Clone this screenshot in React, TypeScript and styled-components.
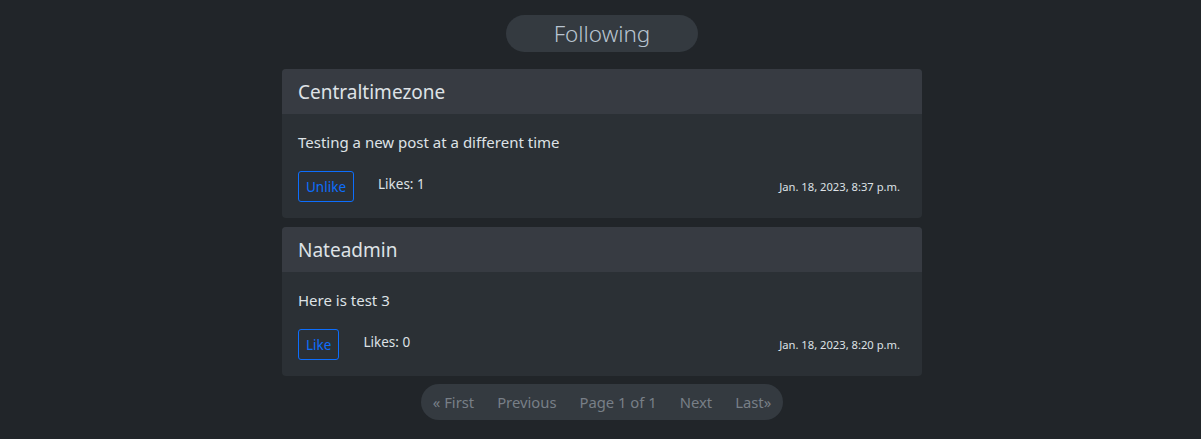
import React from 'react';
import styled, {createGlobalStyle} from 'styled-components';

const GlobalStyle = createGlobalStyle`
  html, body {
    margin: 0;
    padding: 0;
    background: #212529;
  }
  body {
    font-family: "Noto Sans", "Open Sans", sans-serif;
    color: #dee2e6;
  }
`;

type Post = {
  author: string;
  body: string;
  liked: boolean;
  likes: number;
  date: string;
};

const posts: Post[] = [
  {
    author: 'Centraltimezone',
    body: 'Testing a new post at a different time',
    liked: true,
    likes: 1,
    date: 'Jan. 18, 2023, 8:37 p.m.',
  },
  {
    author: 'Nateadmin',
    body: 'Here is test 3',
    liked: false,
    likes: 0,
    date: 'Jan. 18, 2023, 8:20 p.m.',
  },
];

export default function App(): JSX.Element {
  return (
    <Page>
      <GlobalStyle />
      <Heading>Following</Heading>
      <Feed>
        {posts.map(p => (
          <Card key={p.author}>
            <CardHeader>{p.author}</CardHeader>
            <CardBody>
              <PostText>{p.body}</PostText>
              <Footer>
                <LikeButton>{p.liked ? 'Unlike' : 'Like'}</LikeButton>
                <Likes>Likes: {p.likes}</Likes>
                <Stamp>{p.date}</Stamp>
              </Footer>
            </CardBody>
          </Card>
        ))}
      </Feed>
      <Pager>
        <PagerItem>« First</PagerItem>
        <PagerItem>Previous</PagerItem>
        <PagerItem>Page 1 of 1</PagerItem>
        <PagerItem>Next</PagerItem>
        <PagerItem>Last»</PagerItem>
      </Pager>
    </Page>
  );
}

const Page = styled.div`
  display: flex;
  flex-direction: column;
  align-items: center;
  padding-top: 15px;
  padding-left: 3px;
`;

const Heading = styled.div`
  width: 192px;
  height: 37px;
  border-radius: 19px;
  background: #343a40;
  color: #b8c4d0;
  font-weight: 300;
  font-size: 22.5px;
  display: flex;
  align-items: center;
  justify-content: center;
  margin-bottom: 17px;
`;

const Feed = styled.div`
  width: 640px;
  display: flex;
  flex-direction: column;
  gap: 9px;
`;

const Card = styled.div`
  background: #2b3035;
  border-radius: 4px;
  overflow: hidden;
`;

const CardHeader = styled.div`
  height: 45px;
  background: #373b42;
  padding: 0 16px;
  display: flex;
  align-items: center;
  font-size: 19px;
  color: #dee2e6;
`;

const CardBody = styled.div`
  padding: 16px;
`;

const PostText = styled.p`
  margin: 0 0 17px;
  font-size: 15px;
  line-height: 24px;
  color: #dee2e6;
`;

const Footer = styled.div`
  display: flex;
  align-items: center;
`;

const LikeButton = styled.button`
  height: 31px;
  padding: 0 7px;
  font-family: inherit;
  font-size: 13.5px;
  color: #0d6efd;
  background: transparent;
  border: 1px solid #0d6efd;
  border-radius: 3px;
`;

const Likes = styled.span`
  margin-left: 24px;
  margin-bottom: 5px;
  font-size: 13.5px;
  color: #dee2e6;
`;

const Stamp = styled.span`
  margin-left: auto;
  margin-right: 6px;
  font-size: 11.2px;
  color: #dee2e6;
`;

const Pager = styled.div`
  margin-top: 8px;
  height: 36px;
  padding: 0 12px;
  border-radius: 18px;
  background: #343a40;
  display: flex;
  align-items: center;
  gap: 23px;
`;

const PagerItem = styled.span`
  font-size: 14.8px;
  color: #787f87;
`;
